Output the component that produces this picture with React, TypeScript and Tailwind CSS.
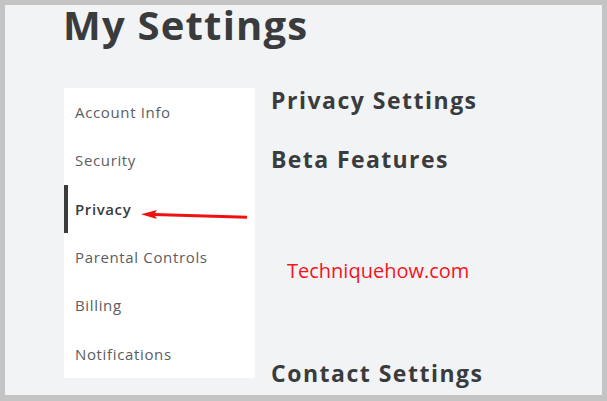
export default function App() {
  const items = ["Account Info", "Security", "Privacy", "Parental Controls", "Billing", "Notifications"];
  return (
    <div className="relative h-[401px] w-[607px] overflow-hidden border-[5px] border-b-[6px] border-[#c4c4c4] bg-[#f2f3f5] font-['Open_Sans',sans-serif] text-[#393b3d]">
      <div className="pl-[58px]">
        <h1 className="h-[83px] text-[40px] font-bold leading-[40px] tracking-[1.2px] text-[#393b3d]">My Settings</h1>
        <div className="flex gap-4">
          <nav className="ml-[1px] flex h-[290px] w-[191px] flex-col bg-white">
            {items.map((item) => (
              <div
                key={item}
                className={
                  item === "Privacy"
                    ? "flex h-[48.33px] items-center border-l-4 border-[#393b3d] pl-[7px] text-[15px] font-semibold tracking-[0.6px] text-[#393b3d]"
                    : "flex h-[48.33px] items-center pl-[11px] text-[15px] tracking-[0.65px] text-[#5b5d5f]"
                }
              >
                {item}
              </div>
            ))}
          </nav>
          <div className="flex flex-col">
            <h2 className="text-[23px] font-bold leading-[24px] tracking-[1.5px]">Privacy Settings</h2>
            <h2 className="mt-[35px] text-[23px] font-bold leading-[24px] tracking-[1.4px]">Beta Features</h2>
            <h2 className="mt-[190px] text-[23px] font-bold leading-[24px] tracking-[1.5px]">Contact Settings</h2>
          </div>
        </div>
      </div>

      <div className="absolute left-[282px] top-[251px] text-[20px] leading-[30px] text-[#f5141e]">Techniquehow.com</div>

      <svg className="absolute left-[125px] top-[195px]" width="125" height="30" viewBox="0 0 125 30">
        <path d="M24 14.6 L117 17.3" stroke="#ee1111" strokeWidth="3" fill="none" />
        <path d="M11 14.3 L27 10 L24 14.5 L27 19 Z" fill="#ee1111" />
      </svg>
    </div>
  );
}
